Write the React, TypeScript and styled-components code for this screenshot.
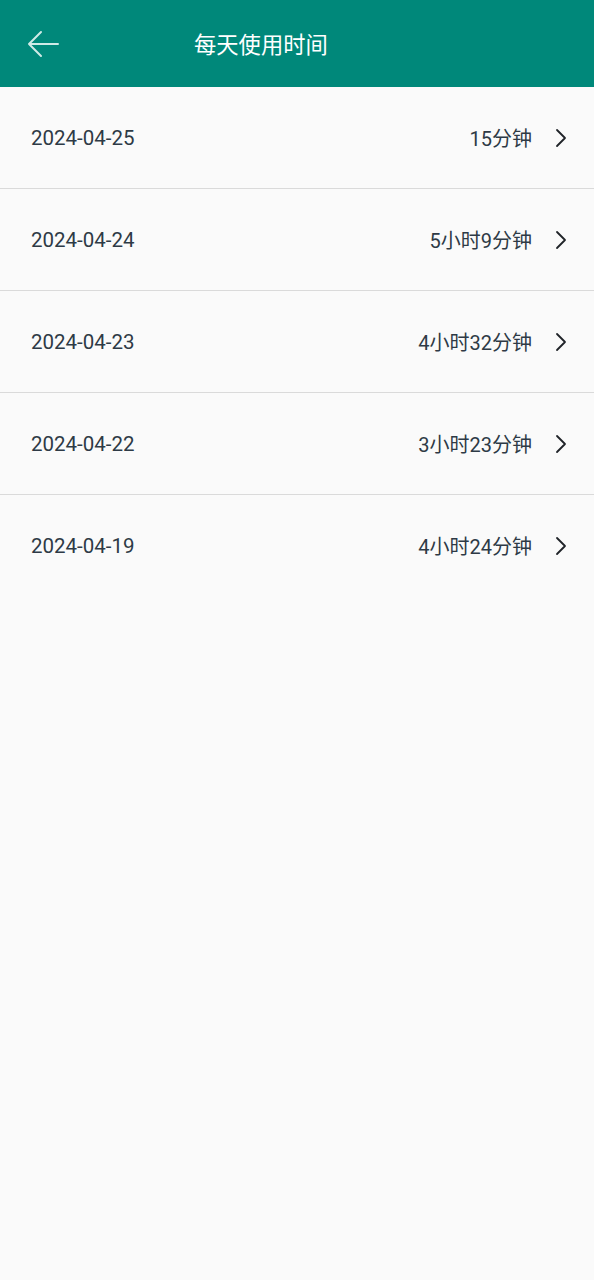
import React from "react";
import styled, { createGlobalStyle } from "styled-components";

const Global = createGlobalStyle`
  html, body { margin: 0; padding: 0; background: #fafafa; }
  body { font-family: Roboto, "Noto Sans CJK SC", sans-serif; }
`;

const Page = styled.div`
  width: 594px;
  min-height: 1280px;
  background: #fafafa;
`;

const Header = styled.header`
  height: 87px;
  background: #00887a;
  display: flex;
  align-items: center;
`;

const BackButton = styled.button`
  border: none;
  background: transparent;
  padding: 0;
  margin-left: 26px;
  width: 34px;
  height: 34px;
  display: flex;
  align-items: center;
  justify-content: center;
`;

const Title = styled.h1`
  margin: -2px 0 0 134px;
  font-family: "Noto Sans CJK SC", sans-serif;
  font-weight: 400;
  font-size: 22.3px;
  color: #ffffff;
`;

const List = styled.ul`
  list-style: none;
  margin: 0;
  padding: 0;
`;

const Row = styled.li`
  height: 101px;
  border-bottom: 1.5px solid #dadada;
  display: flex;
  align-items: center;
  padding: 0 26px 0 31px;
  color: #2e3a46;
  &:last-child { border-bottom: none; }
`;

const DateText = styled.span`
  flex: 1;
  font-family: Roboto, sans-serif;
  font-size: 20.5px;
`;

const Value = styled.span`
  font-family: Roboto, "Noto Sans CJK SC", sans-serif;
  font-size: 20px;
  margin-right: 22px;
`;

const rows = [
  ["2024-04-25", "15分钟"],
  ["2024-04-24", "5小时9分钟"],
  ["2024-04-23", "4小时32分钟"],
  ["2024-04-22", "3小时23分钟"],
  ["2024-04-19", "4小时24分钟"],
];

const Chevron = () => (
  <svg width="14" height="20" viewBox="0 0 14 20" fill="none">
    <path d="M3 2 L11 10 L3 18" stroke="#1f2328" strokeWidth="1.8" strokeLinecap="round" strokeLinejoin="round" />
  </svg>
);

export default function App() {
  return (
    <Page>
      <Global />
      <Header>
        <BackButton aria-label="back">
          <svg width="34" height="30" viewBox="0 0 34 30" fill="none">
            <path d="M3 15 H32 M15 3 L3 15 L15 27" stroke="#cfeae6" strokeWidth="2" strokeLinecap="round" strokeLinejoin="round" />
          </svg>
        </BackButton>
        <Title>每天使用时间</Title>
      </Header>
      <List>
        {rows.map(([d, v]) => (
          <Row key={d}>
            <DateText>{d}</DateText>
            <Value>{v}</Value>
            <Chevron />
          </Row>
        ))}
      </List>
    </Page>
  );
}
